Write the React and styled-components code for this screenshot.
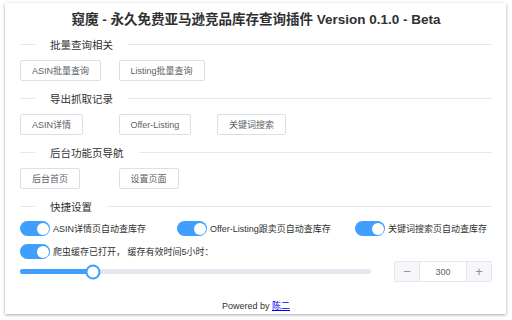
import React from 'react'
import styled, { createGlobalStyle } from 'styled-components'

const GlobalStyle = createGlobalStyle`
  html, body {
    margin: 0;
    padding: 0;
    background: #fff;
  }
  body {
    font-family: "Liberation Sans", Arial, "Noto Sans CJK SC", sans-serif;
  }
`

const Page = styled.div`
  width: 512px;
  height: 320px;
  padding: 3px 0 0 5px;
  box-sizing: border-box;
  overflow: hidden;
`

const Card = styled.div`
  width: 501px;
  height: 311px;
  box-sizing: border-box;
  padding: 0 14px 0 15px;
  background: #fff;
  box-shadow: 0 1px 3px rgba(0, 0, 0, 0.35);
  display: flex;
  flex-direction: column;
`

const Title = styled.h1`
  margin: 7px 0 0;
  font-size: 13.5px;
  line-height: 20px;
  font-weight: bold;
  color: #303133;
  text-align: center;
  white-space: nowrap;
`

const Divider = styled.div`
  display: flex;
  align-items: center;
  height: 14px;
  margin-top: ${(props) => props.top}px;
  &::before {
    content: '';
    width: 15px;
    height: 1px;
    background: #e4e7ed;
  }
  &::after {
    content: '';
    flex: 1;
    height: 1px;
    background: #e4e7ed;
  }
`

const DividerText = styled.span`
  padding: 0 15px;
  font-size: 10.5px;
  color: #303133;
  white-space: nowrap;
`

const ButtonRow = styled.div`
  display: grid;
  grid-template-columns: repeat(4, 98.5px);
  margin-top: 9px;
`

const Button = styled.button`
  justify-self: start;
  height: 21px;
  padding: 0 11px;
  border: 1px solid #dcdfe6;
  border-radius: 2px;
  background: #fff;
  color: #606266;
  font-family: inherit;
  font-size: 9px;
  white-space: nowrap;
`

const SwitchRow = styled.div`
  display: grid;
  grid-template-columns: ${(props) => props.columns};
  align-items: center;
  height: 15px;
  margin-top: ${(props) => props.top}px;
`

const SwitchItem = styled.label`
  display: flex;
  align-items: center;
  gap: 3px;
  font-size: 9px;
  color: #303133;
  white-space: nowrap;
`

const Track = styled.span`
  position: relative;
  width: 30px;
  height: 15px;
  border-radius: 8px;
  background: ${(props) => (props.on ? '#409eff' : '#dcdfe6')};
  flex: none;
  &::after {
    content: '';
    position: absolute;
    top: 1.5px;
    left: ${(props) => (props.on ? '16.5px' : '1.5px')};
    width: 12px;
    height: 12px;
    border-radius: 50%;
    background: #fff;
  }
`

const SliderRow = styled.div`
  display: flex;
  align-items: center;
  gap: 23px;
  margin-top: 2px;
`

const Slider = styled.div`
  position: relative;
  flex: 1;
  height: 5px;
  border-radius: 3px;
  background: #e4e7ed;
`

const SliderFill = styled.div`
  height: 100%;
  border-radius: 3px 0 0 3px;
  background: #409eff;
`

const Thumb = styled.span`
  position: absolute;
  top: 50%;
  width: 15px;
  height: 15px;
  box-sizing: border-box;
  border: 2px solid #409eff;
  border-radius: 50%;
  background: #fff;
  transform: translate(-50%, -50%);
`

const NumberInput = styled.div`
  display: flex;
  width: 98px;
  height: 21px;
  box-sizing: border-box;
  border: 1px solid #e4e7ed;
  border-radius: 2px;
  overflow: hidden;
`

const Step = styled.span`
  width: 24px;
  display: flex;
  align-items: center;
  justify-content: center;
  background: #f5f7fa;
  color: #909399;
  font-size: 13px;
  font-weight: 300;
  ${(props) => (props.side === 'left' ? 'border-right: 1px solid #e4e7ed;' : 'border-left: 1px solid #e4e7ed;')}
`

const Value = styled.span`
  flex: 1;
  display: flex;
  align-items: center;
  justify-content: center;
  font-size: 9px;
  color: #606266;
`

const Footer = styled.div`
  margin-top: 17px;
  line-height: 14px;
  font-size: 9px;
  color: #303133;
  text-align: center;
  a {
    color: #0000ee;
    text-decoration: underline;
  }
`

const sections = [
  { title: '批量查询相关', buttons: ['ASIN批量查询', 'Listing批量查询'] },
  { title: '导出抓取记录', buttons: ['ASIN详情', 'Offer-Listing', '关键词搜索'] },
  { title: '后台功能页导航', buttons: ['后台首页', '设置页面'] },
]

const Switch = ({ on, label }) => (
  <SwitchItem>
    <Track on={on ? 1 : 0} />
    {label}
  </SwitchItem>
)

const App = () => {
  const hours = 5
  return (
    <Page>
      <GlobalStyle />
      <Card>
        <Title>窥魔 - 永久免费亚马逊竞品库存查询插件 Version 0.1.0 - Beta</Title>
        {sections.map((section, i) => (
          <React.Fragment key={section.title}>
            <Divider top={i === 0 ? 7 : 10}>
              <DividerText>{section.title}</DividerText>
            </Divider>
            <ButtonRow>
              {section.buttons.map((b) => (
                <Button key={b}>{b}</Button>
              ))}
            </ButtonRow>
          </React.Fragment>
        ))}
        <Divider top={10}>
          <DividerText>快捷设置</DividerText>
        </Divider>
        <SwitchRow top={8} columns='157px 178px 1fr'>
          <Switch on label='ASIN详情页自动查库存' />
          <Switch on label='Offer-Listing跟卖页自动查库存' />
          <Switch on label='关键词搜索页自动查库存' />
        </SwitchRow>
        <SwitchRow top={8} columns='1fr'>
          <Switch on label={`爬虫缓存已打开， 缓存有效时间${hours}小时：`} />
        </SwitchRow>
        <SliderRow>
          <Slider>
            <SliderFill style={{ width: `${(hours / 24) * 100}%` }} />
            <Thumb style={{ left: `${(hours / 24) * 100}%` }} />
          </Slider>
          <NumberInput>
            <Step side='left'>−</Step>
            <Value>300</Value>
            <Step side='right'>+</Step>
          </NumberInput>
        </SliderRow>
        <Footer>
          Powered by <a href='#'>陈二</a>
        </Footer>
      </Card>
    </Page>
  )
}

export default App
